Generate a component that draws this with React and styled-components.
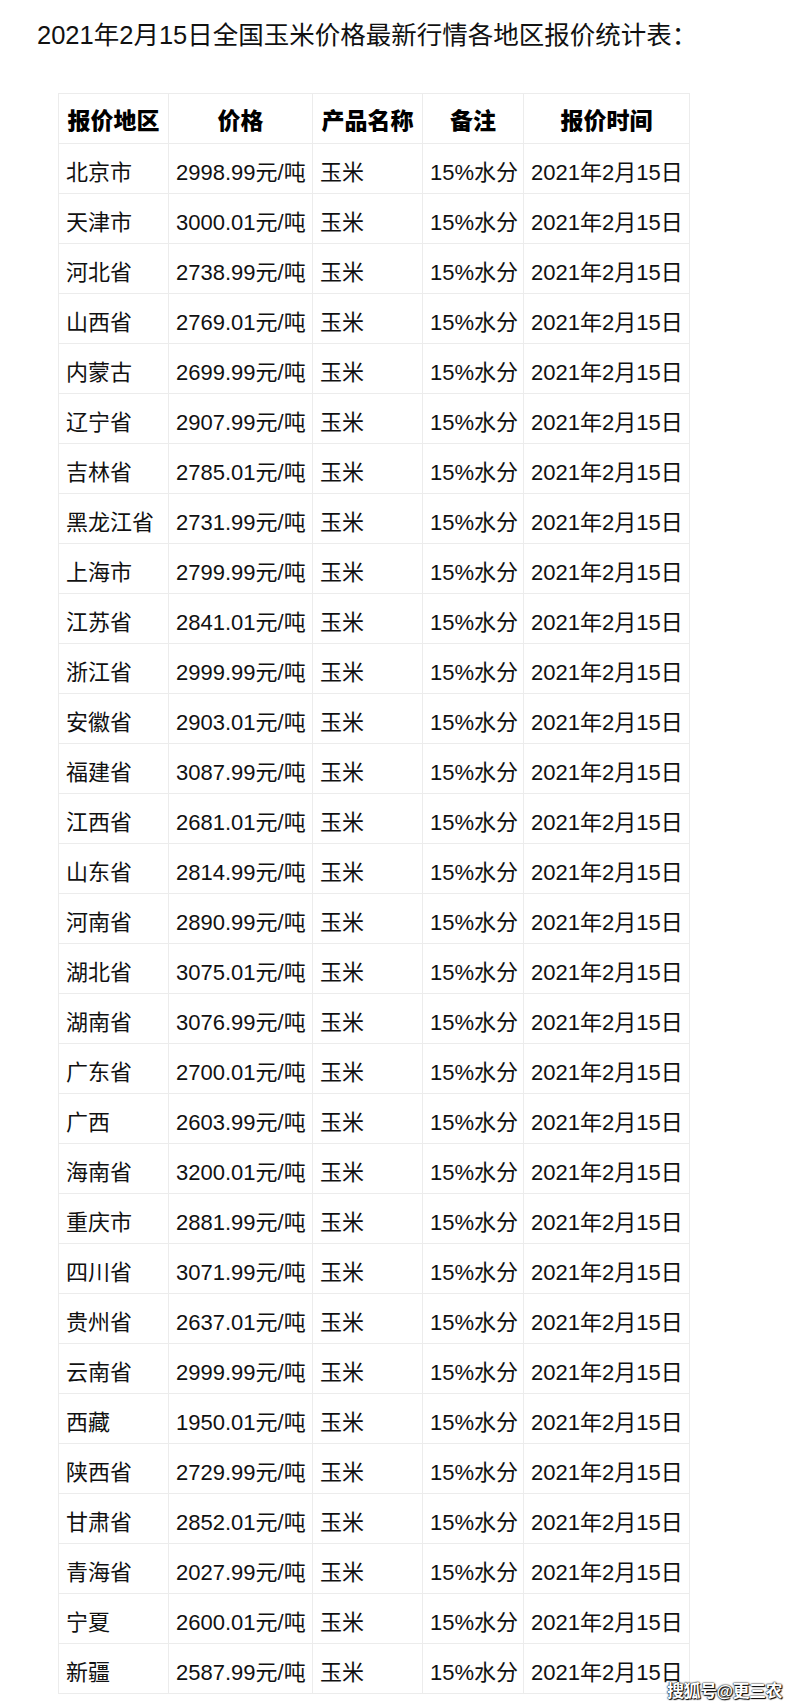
import React from "react";
import styled, { createGlobalStyle } from "styled-components";

const GlobalStyle = createGlobalStyle`
	html, body {
		margin: 0;
		padding: 0;
		background: #fff;
	}
	body {
		font-family: "Liberation Sans", "Noto Sans CJK SC", sans-serif;
		color: #111;
	}
`;

const Page = styled.div`
	position: relative;
	width: 800px;
	height: 1706px;
	box-sizing: border-box;
	padding: 20px 0 0 37px;
	overflow: hidden;
`;

const Title = styled.h1`
	margin: 0;
	font-size: 25.5px;
	line-height: 30px;
	font-weight: normal;
	color: #111;
	white-space: nowrap;
`;

const Table = styled.table`
	margin: 43px 0 0 21px;
	border-collapse: collapse;
	table-layout: fixed;
	width: 631px;
	font-size: 22px;
`;

const HeadCell = styled.th`
	height: 50px;
	padding: 0 2px;
	border: 1px solid #ececec;
	font-size: 23px;
	font-weight: 900;
	text-align: center;
	white-space: nowrap;
	overflow: hidden;
	color: #000;
	box-sizing: border-box;
`;

const Cell = styled.td`
	height: 50px;
	padding: 3px 0 0 7px;
	border: 1px solid #ececec;
	text-align: left;
	white-space: nowrap;
	overflow: hidden;
	color: #111;
	box-sizing: border-box;
`;

const Watermark = styled.div`
	position: absolute;
	left: 667px;
	top: 1677px;
	font-size: 17px;
	font-weight: bold;
	color: #fff;
	letter-spacing: -0.5px;
	text-shadow: 0 0 2px #000, 0 0 1px #000, 1px 1px 1px #000;
`;

const widths = [110, 144, 110, 101, 166];
const headers = ["报价地区", "价格", "产品名称", "备注", "报价时间"];

const rows = [
	["北京市", "2998.99"],
	["天津市", "3000.01"],
	["河北省", "2738.99"],
	["山西省", "2769.01"],
	["内蒙古", "2699.99"],
	["辽宁省", "2907.99"],
	["吉林省", "2785.01"],
	["黑龙江省", "2731.99"],
	["上海市", "2799.99"],
	["江苏省", "2841.01"],
	["浙江省", "2999.99"],
	["安徽省", "2903.01"],
	["福建省", "3087.99"],
	["江西省", "2681.01"],
	["山东省", "2814.99"],
	["河南省", "2890.99"],
	["湖北省", "3075.01"],
	["湖南省", "3076.99"],
	["广东省", "2700.01"],
	["广西", "2603.99"],
	["海南省", "3200.01"],
	["重庆市", "2881.99"],
	["四川省", "3071.99"],
	["贵州省", "2637.01"],
	["云南省", "2999.99"],
	["西藏", "1950.01"],
	["陕西省", "2729.99"],
	["甘肃省", "2852.01"],
	["青海省", "2027.99"],
	["宁夏", "2600.01"],
	["新疆", "2587.99"],
];

export default function App() {
	return (
		<>
			<GlobalStyle />
			<Page>
				<Title>2021年2月15日全国玉米价格最新行情各地区报价统计表：</Title>
				<Table>
					<colgroup>
						{widths.map((w, i) => <col key={i} style={{ width: w }} />)}
					</colgroup>
					<thead>
						<tr>
							{headers.map((h) => <HeadCell key={h}>{h}</HeadCell>)}
						</tr>
					</thead>
					<tbody>
						{rows.map(([area, price]) => (
							<tr key={area}>
								<Cell>{area}</Cell>
								<Cell>{price}元/吨</Cell>
								<Cell>玉米</Cell>
								<Cell>15%水分</Cell>
								<Cell>2021年2月15日</Cell>
							</tr>
						))}
					</tbody>
				</Table>
				<Watermark>搜狐号@更三农</Watermark>
			</Page>
		</>
	);
}
